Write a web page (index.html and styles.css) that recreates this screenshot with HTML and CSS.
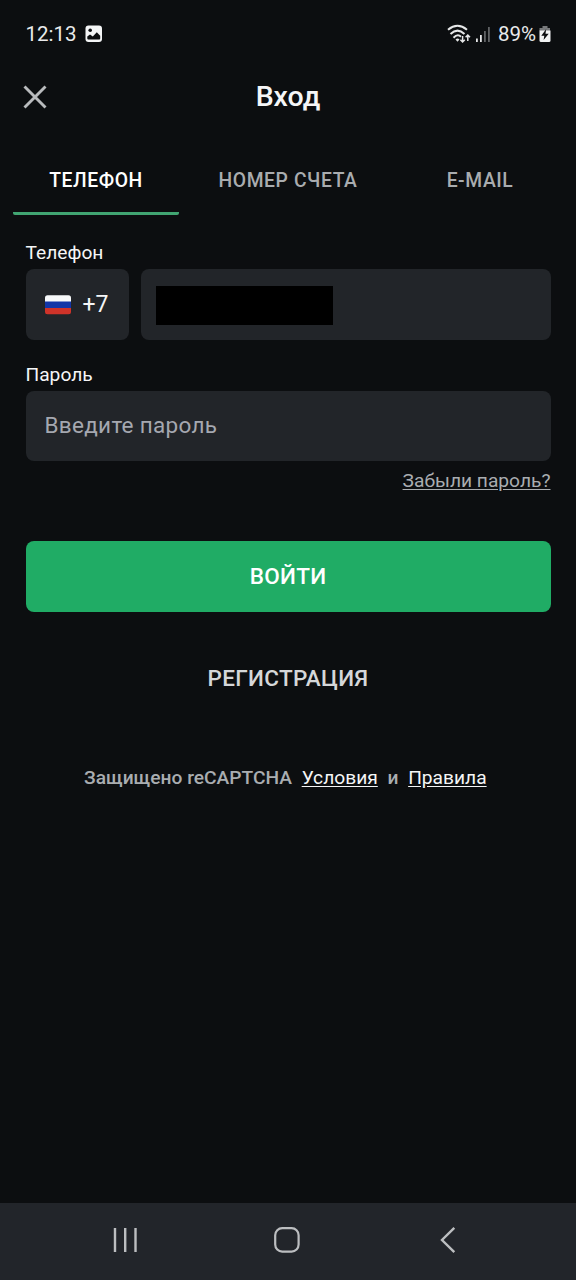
FILE: index.html
```html
<!DOCTYPE html>
<html lang="ru">
<head>
<meta charset="utf-8">
<meta name="viewport" content="width=device-width, initial-scale=1">
<title>Вход</title>
<link rel="stylesheet" href="styles.css">
</head>
<body>
<div class="screen">
  <div class="status">
    <span class="time">12:13</span>
    <svg class="picture" width="18" height="18" viewBox="0 0 18 18"><rect x="0.5" y="0.5" width="16.5" height="16.5" rx="3" fill="#f4f5f6"/><circle cx="5.2" cy="5.3" r="1.8" fill="#0c0e10"/><path d="M2.3 13.5V11.6L5 9.4L7.8 11.6L11.8 7.3L15.2 10.8V13.5Q15.2 14.5 14.2 14.5H3.3Q2.3 14.5 2.3 13.5Z" fill="#0c0e10"/></svg>
    <svg class="wifi" width="24" height="20" viewBox="0 0 24 20" fill="none" stroke="#e6e7e8" stroke-width="2"><path d="M1 5.700Q10.500-2.200 20 5.700M3.500 10Q10.500 3.300 17.500 10M6.500 13.700Q10.500 9.500 14 12.700"/><path d="M8.500 15.500Q10.500 13.600 12.500 15.500L10.500 17.800Z" fill="#e6e7e8" stroke="none"/><path d="M15.600 12V18M13.400 15.800L15.600 18L17.800 15.800M20.800 17V11M18.600 13.200L20.800 11L23 13.200" stroke-width="1.500"/></svg>
    <svg class="signal" width="16" height="18" viewBox="0 0 16 18"><path fill="#e6e7e8" d="M1 13.500h1.800v3.500H1zM5 10h1.800v7H5z"/><path fill="#606264" d="M9 6h1.800v11H9zM13 2h1.800v15H13z"/></svg>
    <span class="percent">89%</span>
    <svg class="battery" width="12" height="18" viewBox="0 0 12 18"><path fill="#77797b" d="M3.5 1h5v2H11v3H.5V3h3z"/><path fill="#f1f2f3" d="M.5 5.500H11.5V15.5Q11.5 17 10 17H2Q.5 17 .5 15.500Z"/><path fill="#0c0e10" d="M7.200 4L2.300 10.700H5.300L4.600 15L9.700 8.700H6.500Z"/></svg>
  </div>
  <header class="header">
    <button class="close" aria-label="Закрыть"><svg width="24" height="24" viewBox="0 0 24 24"><path d="M1.500 1.500L22.500 22.500M22.500 1.500L1.500 22.500" stroke="#b9bbbd" stroke-width="2.900" fill="none"/></svg></button>
    <h1 class="title">Вход</h1>
  </header>
  <nav class="tabs">
    <a class="tab tab-active"><span>ТЕЛЕФОН</span></a>
    <a class="tab"><span>НОМЕР СЧЕТА</span></a>
    <a class="tab"><span>E-MAIL</span></a>
  </nav>
  <main class="form">
    <div class="label label-phone">Телефон</div>
    <div class="phone-row">
      <div class="field code">
        <svg width="26" height="20" viewBox="0 0 26 20"><clipPath id="flag"><rect y=".3" width="26" height="19" rx="2.500"/></clipPath><g clip-path="url(#flag)"><path fill="#f7f9fa" d="M0 0h26v7H0z"/><path fill="#1236a8" d="M0 6.500h26v7H0z"/><path fill="#cf3329" d="M0 13h26v7H0z"/></g></svg>
        <span class="prefix">+7</span>
      </div>
      <div class="field number"><div class="redacted"></div></div>
    </div>
    <div class="label label-password">Пароль</div>
    <div class="field password"><span class="placeholder">Введите пароль</span></div>
    <div class="forgot-row"><a class="forgot">Забыли пароль?</a></div>
    <button class="submit"><span>ВОЙТИ</span></button>
    <a class="register"><span>РЕГИСТРАЦИЯ</span></a>
    <div class="legal"><span class="protected">Защищено reCAPTCHA</span><a class="terms">Условия</a><span class="and">и</span><a class="rules">Правила</a></div>
  </main>
  <footer class="navbar">
    <svg class="recents" width="26" height="26" viewBox="0 0 26 26"><path d="M2 1V25M12.200 1V25M22.500 1V25" stroke="#bcbec0" stroke-width="2.400"/></svg>
    <svg class="home" width="26" height="26" viewBox="0 0 26 26"><rect x="1.200" y="1.200" width="23.400" height="23.400" rx="7" fill="none" stroke="#bcbec0" stroke-width="2.200"/></svg>
    <svg class="back" width="16" height="28" viewBox="0 0 16 28"><path d="M14.300 1.800L2 14L14.300 26.200" fill="none" stroke="#bcbec0" stroke-width="2.400"/></svg>
  </footer>
</div>
</body>
</html>
```
FILE: styles.css
```css
* { box-sizing: border-box; }
body { margin: 0; background: #0c0e10; font-family: Roboto, "Noto Sans", sans-serif; color: #f5f6f7; }
button { border: 0; padding: 0; background: none; font: inherit; color: inherit; }
svg { display: block; flex: none; }
.screen { width: 576px; height: 1280px; display: flex; flex-direction: column; background: #0c0e10; overflow: hidden; white-space: nowrap; }
.status { height: 67px; display: flex; align-items: center; padding: 0 25px 0 25.5px; font-size: 20.5px; color: #e9eaeb; }
.picture { margin-left: 8.5px; }
.wifi { margin-left: auto; }
.signal { margin-left: 4px; }
.percent { margin-left: 7px; }
.battery { margin-left: 3px; }
.header { height: 60px; display: grid; grid-template-columns: 24px 1fr 24px; align-items: center; padding: 0 23px; }
.close { width: 24px; height: 24px; }
.title { margin: 0; font-size: 28.5px; font-weight: 500; text-align: center; line-height: 32px; }
.tabs { height: 88px; padding-top: 17px; display: grid; grid-template-columns: repeat(3, 1fr); }
.tab { display: flex; align-items: center; justify-content: center; margin: 0 13px; padding-top: 4px; border-bottom: 3px solid transparent; color: #a9acaf; font-size: 19.3px; font-weight: 500; letter-spacing: .6px; }
.tab-active { color: #fff; background: linear-gradient(#41a572, #41a572) bottom / 100% 3px no-repeat; background-origin: border-box; border-radius: 2px; }
.form { flex: 1; padding: 26px 25.5px 0; display: flex; flex-direction: column; }
.label { font-size: 19.2px; line-height: 24px; }
.label-phone { margin-bottom: 4px; }
.label-password { margin: 23px 0 4px; }
.phone-row { display: flex; gap: 12.5px; }
.field { height: 71px; border-radius: 8px; background: #222529; display: flex; align-items: center; }
.code { width: 103px; padding-left: 19px; gap: 12px; }
.prefix { font-size: 23px; }
.number { flex: 1; padding: 2px 0 0 15px; }
.redacted { width: 177px; height: 39px; background: #000; }
.password { height: 70px; padding: 0 0 2px 19px; }
.placeholder { color: #a5a8b0; font-size: 22.5px; letter-spacing: .3px; }
.forgot-row { display: flex; justify-content: flex-end; height: 80px; padding-top: 7.5px; }
.forgot { font-size: 19.2px; line-height: 24px; color: #a9adb0; text-decoration: underline; text-underline-offset: 2px; }
.submit { height: 71px; padding-bottom: 2px; border-radius: 8px; background: #20ac65; color: #fff; font-size: 22.5px; font-weight: 500; letter-spacing: .3px; }
.register { height: 132px; display: flex; align-items: center; justify-content: center; color: #d5d7d9; font-size: 22.5px; font-weight: 500; letter-spacing: .3px; }
.legal { display: flex; align-items: center; height: 67px; padding-left: 58.5px; font-size: 19.2px; }
.protected, .and { color: #a9adb0; font-weight: 500; }
.terms, .rules { text-decoration: underline; text-underline-offset: 2px; }
.terms, .and, .rules { margin-left: 9.7px; }
.navbar { height: 77px; display: flex; align-items: center; background: #22252a; padding: 0 0 4px 113px; }
.home { margin-left: 134.5px; }
.back { margin-left: 140.5px; }
```
